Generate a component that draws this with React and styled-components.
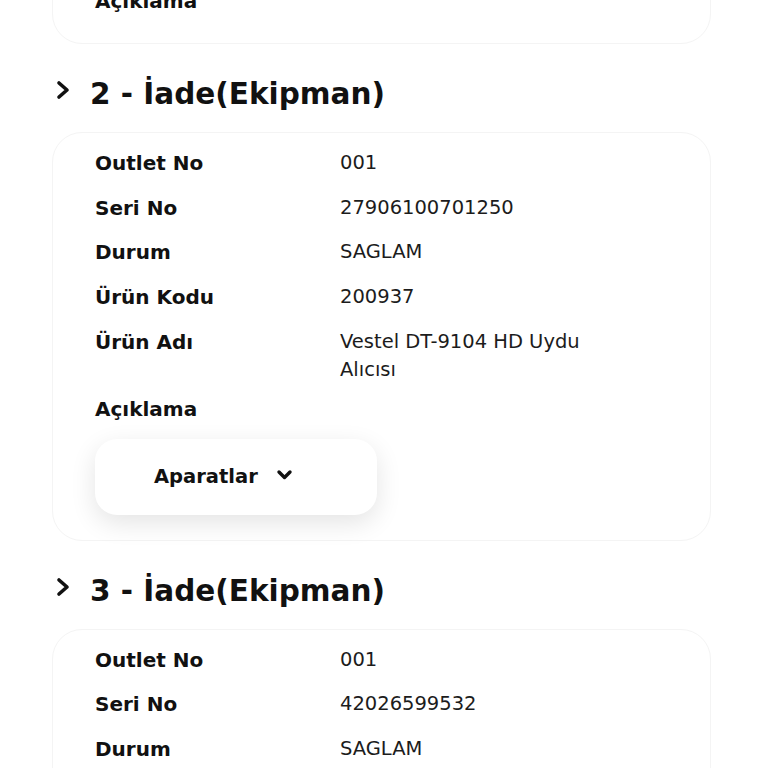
import React from 'react'
import styled, { createGlobalStyle } from 'styled-components'

const GlobalStyle = createGlobalStyle`
    html, body {
        margin: 0;
        padding: 0;
        background: #ffffff;
        overflow: hidden;
    }
    body {
        font-family: "DejaVu Sans", "Noto Sans", sans-serif;
        color: #111;
    }
`;

const items = [
    {
        no: 1,
        rows: [
            ['Outlet No', '001'],
            ['Seri No', '27906100701248'],
            ['Durum', 'SAGLAM'],
            ['Ürün Kodu', '200937'],
            ['Ürün Adı', 'Vestel Uydu'],
            ['Açıklama', ''],
        ],
        hideButton: true,
    },
    {
        no: 2,
        rows: [
            ['Outlet No', '001'],
            ['Seri No', '27906100701250'],
            ['Durum', 'SAGLAM'],
            ['Ürün Kodu', '200937'],
            ['Ürün Adı', 'Vestel DT-9104 HD Uydu Alıcısı'],
            ['Açıklama', ''],
        ],
    },
    {
        no: 3,
        rows: [
            ['Outlet No', '001'],
            ['Seri No', '42026599532'],
            ['Durum', 'SAGLAM'],
            ['Ürün Kodu', '200937'],
            ['Ürün Adı', 'Vestel DT-9104 HD Uydu Alıcısı'],
            ['Açıklama', ''],
        ],
    },
]

const ChevronRight = () => (
    <svg width="16" height="20" viewBox="0 0 16 20">
        <polyline points="4,3 12,10 4,17" fill="none" stroke="#111" strokeWidth="3.6" strokeLinecap="round" strokeLinejoin="round" />
    </svg>
)

const ChevronDown = () => (
    <svg width="17" height="12" viewBox="0 0 17 12">
        <polyline points="3,3 8.5,8.5 14,3" fill="none" stroke="#111" strokeWidth="3.4" strokeLinecap="round" strokeLinejoin="round" />
    </svg>
)

const App = () => {
    return (
        <>
            <GlobalStyle />
            <Page>
                {items.map(item => (
                    <Section key={item.no}>
                        {item.no > 1 && (
                            <Heading>
                                <HeadingIcon><ChevronRight /></HeadingIcon>
                                {item.no} - İade(Ekipman)
                            </Heading>
                        )}
                        <Card>
                            <Rows>
                                {item.rows.map(([label, value]) => (
                                    <Row key={label}>
                                        <Label>{label}</Label>
                                        <Value>{value}</Value>
                                    </Row>
                                ))}
                            </Rows>
                            {!item.hideButton && (
                                <ToggleButton type='button'>
                                    Aparatlar
                                    <ChevronDown />
                                </ToggleButton>
                            )}
                        </Card>
                    </Section>
                ))}
            </Page>
        </>
    )
}

const Page = styled.main`
    display: flex;
    flex-direction: column;
    margin-top: -254px;
    padding: 0 57px 0 52px;
`;

const Section = styled.section`
    display: flex;
    flex-direction: column;
`;

const Heading = styled.h2`
    display: flex;
    align-items: center;
    margin: 30px 0 18px;
    height: 40px;
    font-size: 29.5px;
    line-height: 40px;
    font-weight: bold;
    color: #111;
`;

const HeadingIcon = styled.span`
    display: flex;
    width: 38px;
    padding-left: 3px;
    margin-top: -8px;
    box-sizing: border-box;
`;

const Card = styled.div`
    display: flex;
    flex-direction: column;
    align-items: flex-start;
    border: 1px solid #f4f4f4;
    border-radius: 30px;
    padding: 13px 80px 25px 42px;
    background: #fff;
`;

const Rows = styled.div`
    display: flex;
    flex-direction: column;
    gap: 10.75px;
    width: 100%;
`;

const Row = styled.div`
    display: grid;
    grid-template-columns: 245px 1fr;
    align-items: start;
`;

const Label = styled.div`
    font-size: 20px;
    line-height: 34px;
    font-weight: bold;
    color: #111;
`;

const Value = styled.div`
    font-size: 19.5px;
    line-height: 28px;
    padding-top: 3px;
    margin-bottom: -3px;
    color: #1c1c1c;
`;

const ToggleButton = styled.button`
    display: flex;
    align-items: center;
    gap: 18px;
    margin-top: 13px;
    width: 282px;
    height: 76px;
    padding: 0 0 0 59px;
    border: none;
    border-radius: 22px;
    background: #fff;
    box-shadow: 0 8px 26px rgba(0, 0, 0, 0.11);
    font-family: "DejaVu Sans", sans-serif;
    font-size: 19.5px;
    font-weight: bold;
    color: #111;
    cursor: pointer;

    svg {
        margin-top: -4px;
    }
`;

export default App
